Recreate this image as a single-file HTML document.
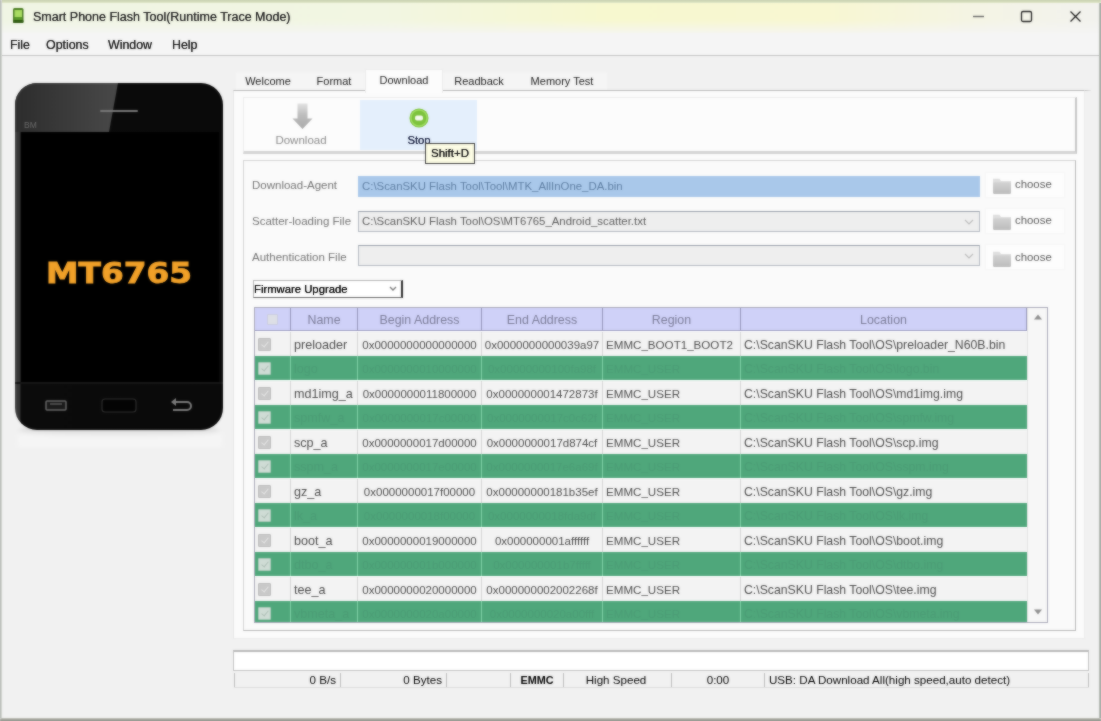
<!DOCTYPE html>
<html>
<head>
<meta charset="utf-8">
<title>Smart Phone Flash Tool</title>
<style>
*{box-sizing:border-box;margin:0;padding:0}
html,body{width:1101px;height:721px;overflow:hidden;background:#f0f0f0}
body{font-family:"Liberation Sans","DejaVu Sans",sans-serif;font-size:11px;color:#222;position:relative}
#app{position:absolute;left:0;top:0;width:1101px;height:721px;filter:url(#appblur);background:#f1f1f1;overflow:hidden}
.abs{position:absolute}
#titlebar{left:0;top:0;width:1101px;height:33px;background:linear-gradient(90deg,#f0f5e4 0%,#f2f6e2 35%,#f7f8cf 55%,#f8f7d2 75%,#f4f4e6 90%,#f2f2ee 100%)}
#topedge{left:0;top:0;width:1101px;height:3px;background:linear-gradient(180deg,#b9c49a,#e6ecd0)}
#title{left:33px;top:10px;font-size:12.5px;color:#1c1c1c;text-shadow:0 0 0.500px #333;white-space:nowrap}
#menubar{left:0;top:33px;width:1101px;height:23px;background:#f5f5f5;border-bottom:1px solid #c4c4c4}
.menu{top:38px;font-size:12.4px;color:#111;text-shadow:0 0 0.500px #333}
.tab{top:73px;height:19px;font-size:11px;color:#222;text-align:center;line-height:17px;white-space:nowrap}
#tabsel{left:365px;top:69px;width:78px;height:24px;background:#fcfcfc;border:1px solid #ececec;border-bottom:none;text-align:center;line-height:20px;font-size:11px;color:#222}
#pane{left:233px;top:90px;width:852px;height:549px;background:#fbfbfb;border:1px solid #ececec;border-top:1px solid #b9b9b9;border-left-color:#e6e6e6}
#toolbar{left:243px;top:97px;width:834px;height:57px;border:1px solid #ececec;border-right:2px solid #c6c6c6;border-bottom:3px solid #d4d4d4;background:#fcfcfc}
#stopbg{left:360px;top:100px;width:117px;height:50px;background:#e4effc}
#frame{left:243px;top:160px;width:833px;height:471px;border:1px solid #d4d4d4;border-right:1.500px solid #b8b8b8;border-bottom:1.500px solid #b8b8b8;background:#fafafa}
.lbl{left:252px;font-size:11.5px;color:#747474;white-space:nowrap}
.inp{left:358px;width:622px;height:21px;border:1px solid #b4bac2;border-top-color:#9aa1ab;background:#eeeeee;font-size:11.4px;color:#5c5c5c;line-height:19px;padding-left:3px;white-space:nowrap;overflow:hidden}
.choose{left:1015px;font-size:11.4px;color:#5a5a5a}
.chbtn{left:985px;width:80px;height:26px;background:#fdfdfd;border:1px solid #f6f6f6}
.folder{left:992px;width:18px;height:15px;background:linear-gradient(180deg,#d8d8d8,#c2c2c2);border:1px solid #b6b6b6;border-radius:1px}
#combo{left:253px;top:280px;width:150px;height:18px;background:#fff;border:1px solid #b5b5b5;border-right:2px solid #2b2b2b;border-bottom:1.500px solid #666;font-size:11.3px;color:#000;line-height:16px;padding-left:0px;white-space:nowrap;text-shadow:0 0 0.4px #000}
#tablebox{left:254px;top:307px;width:794px;height:316px;background:#fff;border:1px solid #a9a9b8;overflow:hidden}
#thead{left:255px;top:308px;width:772px;height:23px;background:#cfd1f8;border-bottom:1px solid #9c9cc0}
.th{top:308px;height:23px;line-height:24.500px;text-align:center;font-size:12.4px;color:#7b7c98;border-left:1px solid #9596ba}
#rowclip{left:255px;top:331px;width:772px;height:291px;overflow:hidden}
.row{left:0;width:772px;height:24.5px;font-size:11px;white-space:nowrap}
.row.w{background:#f3f3f3;color:#4c4c4c}
.row.g{background:#4fa77b;color:#4b9c75}
.row .c{position:absolute;top:1px;line-height:25px;height:24.5px}
.row .c4{top:0}
.c1{left:39px;font-size:12.6px}.c2{left:103px;width:123px;text-align:center;font-size:11.5px}.c3{left:227px;width:120px;text-align:center;font-size:11.5px}.c4{left:351px;font-size:11.6px}.c5{left:489px;font-size:12.25px}
.row .v{position:absolute;top:0;width:1px;height:25px;background:#d6d6d6}
.row.g .v{background:#7fd0a6}
.row.w{border-top:1px solid #fff}
.cb{position:absolute;left:3px;top:6px;width:13px;height:13px;background:#c9c9c9;border:1px solid #bdbdbd;border-radius:1px}
.row.g .cb{background:#cfdcd5;border-color:#a9c9b8}
.cb::after{content:"";position:absolute;left:3.500px;top:1px;width:3px;height:6px;border:solid #e4e4e4;border-width:0 1.500px 1.500px 0;transform:rotate(40deg)}
.row.g .cb::after{border-color:#aebfb6}
#vsb{left:1027px;top:308px;width:20px;height:314px;background:#f7f7f7;border-left:1px solid #e4e4e4}
#prog{left:233px;top:650px;width:856px;height:21px;background:#fff;border:1px solid #c3c3c3;border-top:2px solid #b9b9b9}
.st{top:673px;font-size:11.6px;color:#000;white-space:nowrap}
.sv{top:673px;width:1px;height:14px;background:#bdbdbd}
</style>
</head>
<body>
<svg width="0" height="0" style="position:absolute"><filter id="appblur" x="0" y="0" width="1" height="1" color-interpolation-filters="sRGB"><feGaussianBlur in="SourceGraphic" stdDeviation="1" result="b"/><feComposite in="b" in2="SourceGraphic" operator="arithmetic" k1="0" k2="0.550" k3="0.450" k4="0"/></filter></svg>
<div id="app">
<div id="titlebar" class="abs"></div>
<div class="abs" style="left:0;top:20px;width:1101px;height:16px;background:linear-gradient(180deg,rgba(245,245,245,0),rgba(245,245,245,1))"></div>
<div id="topedge" class="abs"></div>
<svg class="abs" style="left:12px;top:7px" width="13" height="17" viewBox="0 0 13 17"><rect x="1" y="1" width="10.500" height="15" rx="1.500" fill="#4a7d22"/><rect x="2.500" y="3" width="7.500" height="7" fill="#a9dc62"/><rect x="2.500" y="10" width="7.500" height="3" fill="#5a9a2a"/><rect x="1" y="13" width="10.500" height="3" rx="1" fill="#2f5a12"/></svg>
<div id="title" class="abs">Smart Phone Flash Tool(Runtime Trace Mode)</div>
<svg class="abs" style="left:960px;top:0" width="141" height="33" viewBox="0 0 141 33"><path d="M13 16.5h11" stroke="#666" stroke-width="1.4" fill="none"/><rect x="61.500" y="11.500" width="10" height="10" rx="1.500" stroke="#222" stroke-width="1.3" fill="none"/><path d="M110.500 11.500l10 10M120.500 11.500l-10 10" stroke="#222" stroke-width="1.3" fill="none"/></svg>
<div id="menubar" class="abs"></div>
<div class="abs" style="left:1099px;top:3px;width:2px;height:718px;background:linear-gradient(90deg,#c9cdc6,#7d857d)"></div>
<div class="abs" style="left:1084px;top:90px;width:7px;height:1px;background:linear-gradient(90deg,#b9b9b9,#e4e4e4)"></div>
<div class="abs" style="left:0;top:0;width:2px;height:721px;background:linear-gradient(90deg,#9aa09a,#e0e2de)"></div>
<div class="abs" style="left:0;top:718px;width:1101px;height:3px;background:linear-gradient(180deg,#cfcfc8,#6f7268)"></div>
<div class="abs menu" style="left:10px">File</div>
<div class="abs menu" style="left:46px">Options</div>
<div class="abs menu" style="left:108px">Window</div>
<div class="abs menu" style="left:172px">Help</div>
<!-- phone -->
<svg class="abs" style="left:8px;top:76px" width="224" height="372" viewBox="0 0 224 372">
<defs>
<linearGradient id="gl" x1="0" y1="0" x2="1" y2="0"><stop offset="0" stop-color="#2e2e2e"/><stop offset="1" stop-color="#4c4c4c"/></linearGradient>
<radialGradient id="sh" cx="0.500" cy="0.500" r="0.500"><stop offset="0" stop-color="#000" stop-opacity="0.350"/><stop offset="1" stop-color="#000" stop-opacity="0"/></radialGradient>
<linearGradient id="bd" x1="0" y1="0" x2="1" y2="0"><stop offset="0" stop-color="#404040"/><stop offset="0.022" stop-color="#333"/><stop offset="0.030" stop-color="#0b0b0b"/><stop offset="1" stop-color="#0a0a0a"/></linearGradient>
<filter id="bl"><feGaussianBlur stdDeviation="2.500"/></filter>
</defs>
<ellipse cx="111" cy="355" rx="100" ry="6" fill="#000" opacity="0.120" filter="url(#bl)"/><rect x="10" y="356" width="204" height="16" fill="#f8f8f8" opacity="0.700" filter="url(#bl)"/>
<rect x="7" y="7" width="208" height="347" rx="22" fill="url(#bd)"/>
<path d="M29 7 H110 L101 56 H7 V29 A22 22 0 0 1 29 7 Z" fill="url(#gl)" opacity="0.950"/>
<rect x="13" y="56" width="198" height="250" fill="#000"/>
<rect x="7" y="306" width="208" height="2" fill="#161616"/>
<rect x="92" y="34" width="38" height="2" rx="1" fill="#777"/>
<text x="16" y="52" font-family="Liberation Sans, sans-serif" font-size="8.500" fill="#6a6a6a">BM</text>
<text x="111" y="207" text-anchor="middle" font-family="DejaVu Sans, Liberation Sans, sans-serif" font-weight="bold" font-size="29" fill="#f0a028" stroke="#f0a028" stroke-width="0.900" textLength="146" lengthAdjust="spacingAndGlyphs">MT6765</text>
<rect x="38" y="325" width="20" height="9" rx="1" fill="#1a1a1a" stroke="#666" stroke-width="1.500"/><path d="M42 328h12" stroke="#777" stroke-width="1"/>
<rect x="94" y="323" width="34" height="13" rx="3" fill="#040404" stroke="#2c2c2c" stroke-width="1.200"/>
<path d="M165 326 h14 a4 4 0 0 1 0 8 h-14" fill="none" stroke="#7a7a7a" stroke-width="2"/><path d="M168 322 l-5 4 5 4z" fill="#7a7a7a"/>
</svg>
<!-- tabs -->
<div id="pane" class="abs"></div>
<div class="abs" style="left:236px;top:72px;width:371px;height:18px;background:#f5f5f5;border-top:1px solid #f3f3f3"></div>
<div class="abs tab" style="left:241px;width:54px">Welcome</div>
<div class="abs tab" style="left:309px;width:50px">Format</div>
<div id="tabsel" class="abs">Download</div>
<div class="abs tab" style="left:449px;width:60px">Readback</div>
<div class="abs tab" style="left:524px;width:76px">Memory Test</div>
<!-- toolbar -->
<div id="toolbar" class="abs"></div>
<div id="stopbg" class="abs"></div>
<svg class="abs" style="left:290px;top:102px" width="24" height="29" viewBox="0 0 24 29"><defs><linearGradient id="ag" x1="0" y1="0" x2="0" y2="1"><stop offset="0" stop-color="#e2e2e2"/><stop offset="0.450" stop-color="#bdbdbd"/><stop offset="1" stop-color="#a9a9a9"/></linearGradient></defs><path d="M7.500 1.500h10v15h5L12.500 27 2.500 16.500h5z" fill="url(#ag)"/></svg>
<div class="abs" style="left:271px;top:134px;width:60px;text-align:center;font-size:11.5px;color:#8c8c8c">Download</div>
<svg class="abs" style="left:408px;top:107px" width="22" height="22" viewBox="0 0 22 22"><circle cx="11" cy="11" r="9.500" fill="#7cc23c"/><circle cx="11" cy="11" r="8" fill="none" stroke="#9ad95a" stroke-width="1.500"/><rect x="7" y="8.500" width="8" height="5" rx="2" fill="#f4f9ee"/></svg>
<div class="abs" style="left:389px;top:134px;width:60px;text-align:center;font-size:11.3px;color:#1a2140;text-shadow:0 0 0.400px #1a2140">Stop</div>
<div class="abs" style="z-index:5;left:425px;top:143px;width:50px;height:21px;background:#fcfce4;border:1.500px solid #3c3c3c;font-size:11.5px;color:#0a0a0a;line-height:18px;text-align:center;text-shadow:0 0 0.500px #222">Shift+D</div>
<!-- frame -->
<div id="frame" class="abs"></div>
<div class="abs lbl" style="top:179px">Download-Agent</div>
<div class="abs lbl" style="top:215px">Scatter-loading File</div>
<div class="abs lbl" style="top:251px">Authentication File</div>
<div class="abs inp" style="top:176px;background:#a9c8ea;border-color:#a9c8ea;color:#5f7fa3">C:\ScanSKU Flash Tool\Tool\MTK_AllInOne_DA.bin</div>
<div class="abs inp" style="top:211px">C:\ScanSKU Flash Tool\OS\MT6765_Android_scatter.txt</div>
<div class="abs inp" style="top:245px"></div>
<svg class="abs" style="left:963px;top:217px" width="12" height="10" viewBox="0 0 12 10"><path d="M2 3l4 4 4-4" fill="none" stroke="#bdbdbd" stroke-width="1.200"/></svg>
<svg class="abs" style="left:963px;top:251px" width="12" height="10" viewBox="0 0 12 10"><path d="M2 3l4 4 4-4" fill="none" stroke="#bdbdbd" stroke-width="1.200"/></svg>
<div class="abs chbtn" style="top:172px"></div><div class="abs chbtn" style="top:208px"></div><div class="abs chbtn" style="top:244px"></div>
<svg width="0" height="0" style="position:absolute"><defs><linearGradient id="fg" x1="0" y1="0" x2="0" y2="1"><stop offset="0" stop-color="#d2d2d2"/><stop offset="1" stop-color="#bcbcbc"/></linearGradient></defs></svg><svg class="abs" style="left:992px;top:176px" width="20" height="19" viewBox="0 0 20 17" preserveAspectRatio="none"><path d="M1 2.500h6.500l1.500 2h10v3H1z" fill="#dedede"/><rect x="1" y="5.500" width="18" height="10.500" rx="1" fill="url(#fg)"/></svg><svg class="abs" style="left:992px;top:212px" width="20" height="19" viewBox="0 0 20 17" preserveAspectRatio="none"><path d="M1 2.500h6.500l1.500 2h10v3H1z" fill="#dedede"/><rect x="1" y="5.500" width="18" height="10.500" rx="1" fill="url(#fg)"/></svg><svg class="abs" style="left:992px;top:249px" width="20" height="19" viewBox="0 0 20 17" preserveAspectRatio="none"><path d="M1 2.500h6.500l1.500 2h10v3H1z" fill="#dedede"/><rect x="1" y="5.500" width="18" height="10.500" rx="1" fill="url(#fg)"/></svg>
<div class="abs choose" style="top:178px">choose</div>
<div class="abs choose" style="top:214px">choose</div>
<div class="abs choose" style="top:251px">choose</div>
<div id="combo" class="abs">Firmware Upgrade</div>
<svg class="abs" style="left:387px;top:284px" width="12" height="10" viewBox="0 0 12 10"><path d="M3 3l3 3 3-3" fill="none" stroke="#7a7a7a" stroke-width="1.400"/></svg>
<!-- table -->
<div id="tablebox" class="abs"></div>
<div id="thead" class="abs"></div>
<div class="abs th" style="left:255px;width:35px;border-left:none"></div>
<div class="abs th" style="left:290px;width:67px">Name</div>
<div class="abs th" style="left:357px;width:124px">Begin Address</div>
<div class="abs th" style="left:481px;width:121px">End Address</div>
<div class="abs th" style="left:602px;width:138px">Region</div>
<div class="abs th" style="left:740px;width:287px;border-right:1px solid #9596ba">Location</div>
<div class="abs" style="left:267px;top:314px;width:11px;height:11px;background:#dddfe6;border:1px solid #cbcde0;border-radius:1px"></div>
<div class="abs" id="rowclip">
<div class="abs row w" style="top:0.0px"><span class="cb"></span><span class="c c1">preloader</span><span class="c c2">0x0000000000000000</span><span class="c c3">0x0000000000039a97</span><span class="c c4">EMMC_BOOT1_BOOT2</span><span class="c c5">C:\ScanSKU Flash Tool\OS\preloader_N60B.bin</span><i class="v" style="left:35px"></i><i class="v" style="left:102px"></i><i class="v" style="left:226px"></i><i class="v" style="left:347px"></i><i class="v" style="left:485px"></i></div>
<div class="abs row g" style="top:24.5px"><span class="cb"></span><span class="c c1">logo</span><span class="c c2">0x0000000010000000</span><span class="c c3">0x00000000100fa98f</span><span class="c c4">EMMC_USER</span><span class="c c5">C:\ScanSKU Flash Tool\OS\logo.bin</span><i class="v" style="left:35px"></i><i class="v" style="left:102px"></i><i class="v" style="left:226px"></i><i class="v" style="left:347px"></i><i class="v" style="left:485px"></i></div>
<div class="abs row w" style="top:49.0px"><span class="cb"></span><span class="c c1">md1img_a</span><span class="c c2">0x0000000011800000</span><span class="c c3">0x000000001472873f</span><span class="c c4">EMMC_USER</span><span class="c c5">C:\ScanSKU Flash Tool\OS\md1img.img</span><i class="v" style="left:35px"></i><i class="v" style="left:102px"></i><i class="v" style="left:226px"></i><i class="v" style="left:347px"></i><i class="v" style="left:485px"></i></div>
<div class="abs row g" style="top:73.5px"><span class="cb"></span><span class="c c1">spmfw_a</span><span class="c c2">0x0000000017c00000</span><span class="c c3">0x0000000017c0c62f</span><span class="c c4">EMMC_USER</span><span class="c c5">C:\ScanSKU Flash Tool\OS\spmfw.img</span><i class="v" style="left:35px"></i><i class="v" style="left:102px"></i><i class="v" style="left:226px"></i><i class="v" style="left:347px"></i><i class="v" style="left:485px"></i></div>
<div class="abs row w" style="top:98.0px"><span class="cb"></span><span class="c c1">scp_a</span><span class="c c2">0x0000000017d00000</span><span class="c c3">0x0000000017d874cf</span><span class="c c4">EMMC_USER</span><span class="c c5">C:\ScanSKU Flash Tool\OS\scp.img</span><i class="v" style="left:35px"></i><i class="v" style="left:102px"></i><i class="v" style="left:226px"></i><i class="v" style="left:347px"></i><i class="v" style="left:485px"></i></div>
<div class="abs row g" style="top:122.5px"><span class="cb"></span><span class="c c1">sspm_a</span><span class="c c2">0x0000000017e00000</span><span class="c c3">0x0000000017e6a69f</span><span class="c c4">EMMC_USER</span><span class="c c5">C:\ScanSKU Flash Tool\OS\sspm.img</span><i class="v" style="left:35px"></i><i class="v" style="left:102px"></i><i class="v" style="left:226px"></i><i class="v" style="left:347px"></i><i class="v" style="left:485px"></i></div>
<div class="abs row w" style="top:147.0px"><span class="cb"></span><span class="c c1">gz_a</span><span class="c c2">0x0000000017f00000</span><span class="c c3">0x00000000181b35ef</span><span class="c c4">EMMC_USER</span><span class="c c5">C:\ScanSKU Flash Tool\OS\gz.img</span><i class="v" style="left:35px"></i><i class="v" style="left:102px"></i><i class="v" style="left:226px"></i><i class="v" style="left:347px"></i><i class="v" style="left:485px"></i></div>
<div class="abs row g" style="top:171.5px"><span class="cb"></span><span class="c c1">lk_a</span><span class="c c2">0x0000000018f00000</span><span class="c c3">0x0000000018fda9df</span><span class="c c4">EMMC_USER</span><span class="c c5">C:\ScanSKU Flash Tool\OS\lk.img</span><i class="v" style="left:35px"></i><i class="v" style="left:102px"></i><i class="v" style="left:226px"></i><i class="v" style="left:347px"></i><i class="v" style="left:485px"></i></div>
<div class="abs row w" style="top:196.0px"><span class="cb"></span><span class="c c1">boot_a</span><span class="c c2">0x0000000019000000</span><span class="c c3">0x000000001affffff</span><span class="c c4">EMMC_USER</span><span class="c c5">C:\ScanSKU Flash Tool\OS\boot.img</span><i class="v" style="left:35px"></i><i class="v" style="left:102px"></i><i class="v" style="left:226px"></i><i class="v" style="left:347px"></i><i class="v" style="left:485px"></i></div>
<div class="abs row g" style="top:220.5px"><span class="cb"></span><span class="c c1">dtbo_a</span><span class="c c2">0x000000001b000000</span><span class="c c3">0x000000001b7fffff</span><span class="c c4">EMMC_USER</span><span class="c c5">C:\ScanSKU Flash Tool\OS\dtbo.img</span><i class="v" style="left:35px"></i><i class="v" style="left:102px"></i><i class="v" style="left:226px"></i><i class="v" style="left:347px"></i><i class="v" style="left:485px"></i></div>
<div class="abs row w" style="top:245.0px"><span class="cb"></span><span class="c c1">tee_a</span><span class="c c2">0x0000000020000000</span><span class="c c3">0x000000002002268f</span><span class="c c4">EMMC_USER</span><span class="c c5">C:\ScanSKU Flash Tool\OS\tee.img</span><i class="v" style="left:35px"></i><i class="v" style="left:102px"></i><i class="v" style="left:226px"></i><i class="v" style="left:347px"></i><i class="v" style="left:485px"></i></div>
<div class="abs row g" style="top:269.5px"><span class="cb"></span><span class="c c1">vbmeta_a</span><span class="c c2">0x0000000020a00000</span><span class="c c3">0x0000000020a00fff</span><span class="c c4">EMMC_USER</span><span class="c c5">C:\ScanSKU Flash Tool\OS\vbmeta.img</span><i class="v" style="left:35px"></i><i class="v" style="left:102px"></i><i class="v" style="left:226px"></i><i class="v" style="left:347px"></i><i class="v" style="left:485px"></i></div>
</div>
<div id="vsb" class="abs"></div>
<svg class="abs" style="left:1032px;top:312px" width="12" height="10" viewBox="0 0 12 10"><path d="M2 7.500L6 2.500l4 5z" fill="#8f8f8f"/></svg>
<svg class="abs" style="left:1032px;top:607px" width="12" height="10" viewBox="0 0 12 10"><path d="M2 2.500L6 7.500l4-5z" fill="#8f8f8f"/></svg>
<div class="abs" style="left:254px;top:622px;width:794px;height:1px;background:#a9a9b8"></div>
<!-- status -->
<div class="abs" style="left:234px;top:687px;width:855px;height:1px;background:#dcdcdc"></div>
<div id="prog" class="abs"></div>
<div class="abs st" style="left:236px;width:100px;text-align:right">0 B/s</div>
<div class="abs st" style="left:342px;width:100px;text-align:right">0 Bytes</div>
<div class="abs st" style="left:511px;width:52px;text-align:center;font-weight:bold;font-size:10.8px;top:674px">EMMC</div>
<div class="abs st" style="left:564px;width:104px;text-align:center">High Speed</div>
<div class="abs st" style="left:672px;width:92px;text-align:center">0:00</div>
<div class="abs st" style="left:769px">USB: DA Download All(high speed,auto detect)</div>
<div class="abs sv" style="left:234px"></div><div class="abs sv" style="left:340px"></div><div class="abs sv" style="left:446px"></div><div class="abs sv" style="left:510px"></div><div class="abs sv" style="left:563px"></div><div class="abs sv" style="left:671px"></div><div class="abs sv" style="left:764px"></div><div class="abs sv" style="left:1088px"></div>
</div>
</body>
</html>
